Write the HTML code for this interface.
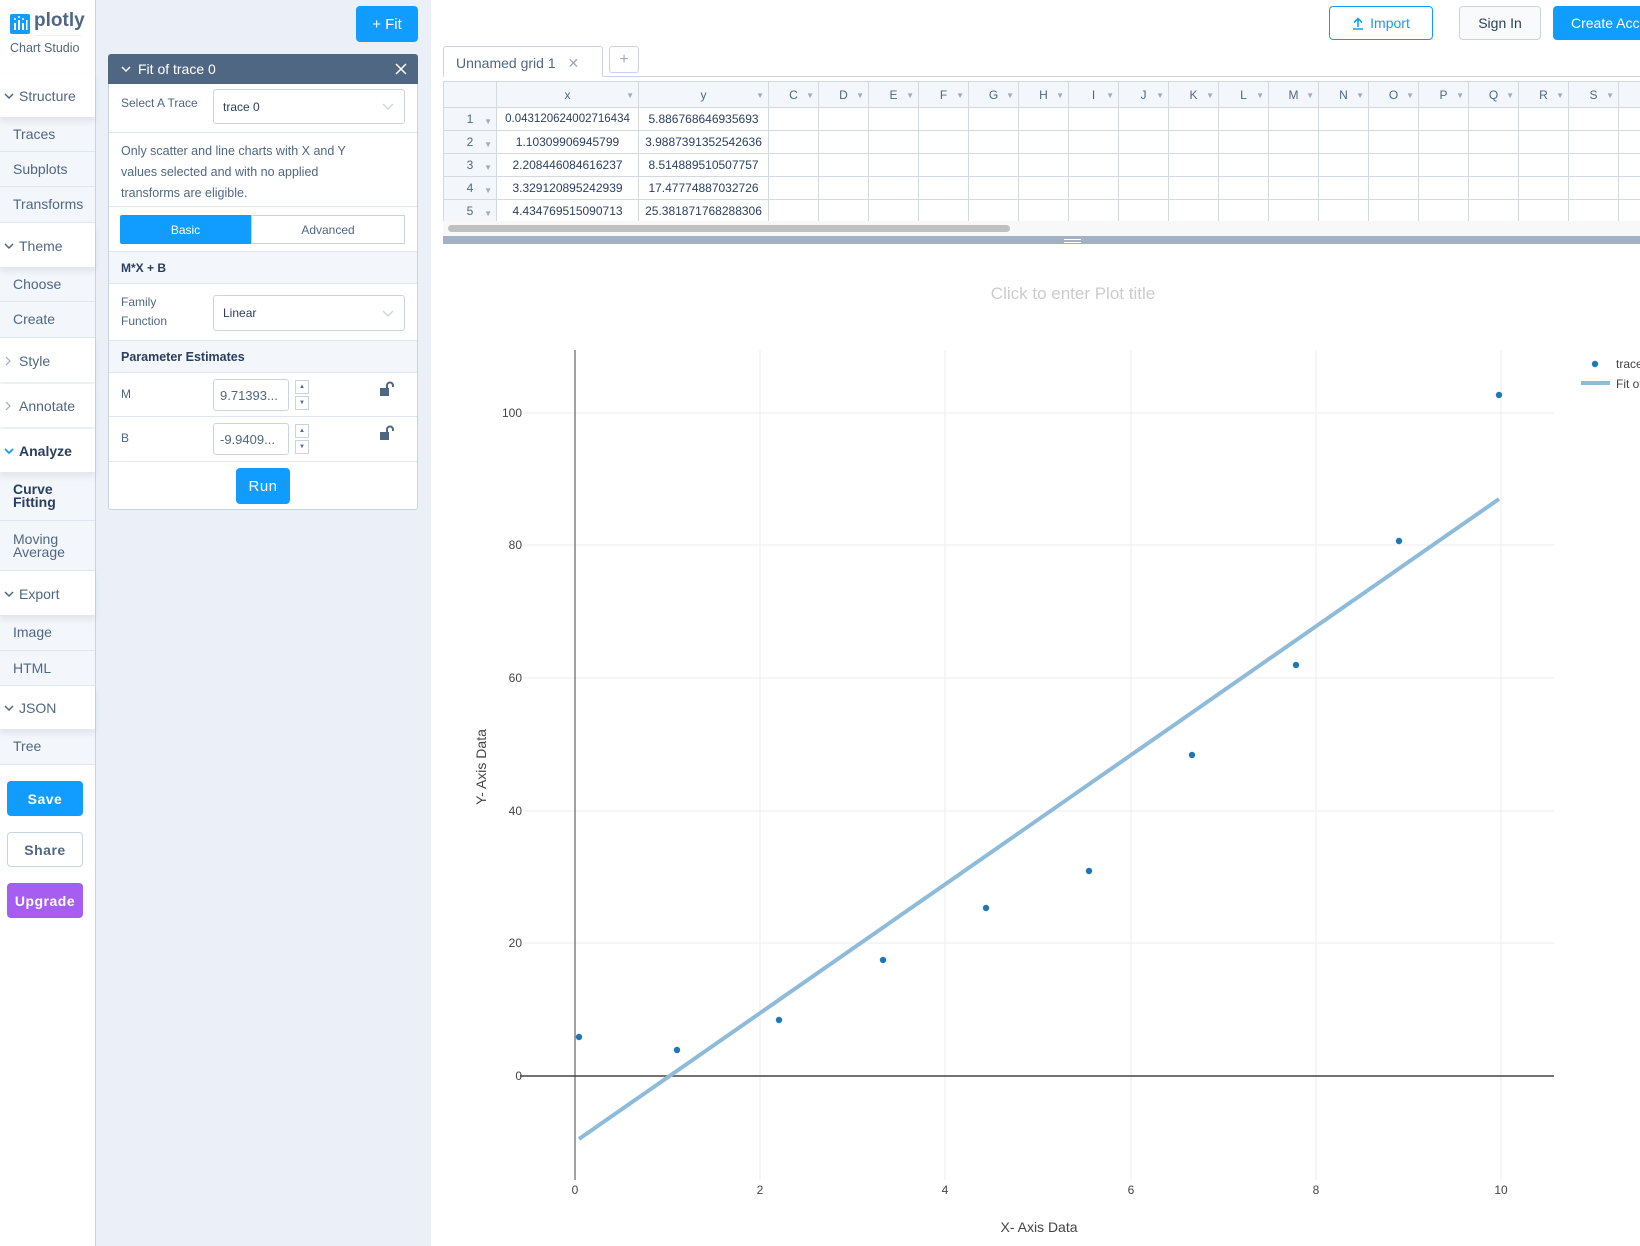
<!DOCTYPE html>
<html><head><meta charset="utf-8"><style>
*{box-sizing:border-box;margin:0;padding:0}
body{width:1640px;height:1246px;position:relative;overflow:hidden;font-family:"Liberation Sans",sans-serif;background:#fff;color:#506784}
.a{position:absolute}
#side{left:0;top:0;width:96px;height:1246px;background:#fff;border-right:1px solid #c8d4e3}
.hd{position:absolute;left:0;width:95px;background:#fff;font-size:14px;color:#506784;padding-left:19px;display:flex;align-items:center;box-shadow:0 4px 6px rgba(80,103,132,.12);z-index:2}
.hd svg{position:absolute;left:4px}
.it{position:absolute;left:0;width:95px;background:#f3f6fa;border-bottom:1px solid #dfe6ef;font-size:14px;color:#506784;padding-left:13px;display:flex;align-items:center;line-height:13px}
.btn{position:absolute;left:7px;width:76px;height:35px;border-radius:4px;font-size:14px;font-weight:bold;display:flex;align-items:center;justify-content:center;letter-spacing:.5px}
#pcol{left:96px;top:0;width:335px;height:1246px;background:#ebf0f8}
#panel{left:108px;top:54px;width:310px;height:456px;background:#fff;border:1px solid #c8d4e3;border-radius:3px}
.row{position:absolute;left:0;width:308px;border-bottom:1px solid #dfe6ef}
.lbl{position:absolute;left:12px;font-size:12px;color:#506784}
.sel{position:absolute;left:104px;width:192px;border:1px solid #c8d4e3;border-radius:3px;font-size:12px;color:#2a3f5f;padding-left:9px;display:flex;align-items:center}
.sel svg{position:absolute;right:10px}
table{border-collapse:collapse;font-family:"Liberation Sans",sans-serif;font-size:12px;color:#2a3f5f}
td{border:1px solid #d4d9e0;height:23px;text-align:center;white-space:nowrap;overflow:hidden}
th{border:1px solid #d4d9e0;height:26px;background:#f3f6fa;font-weight:normal;color:#506784;font-size:12px;position:relative}
th span.d,td span.d{font-size:8px;color:#a0aabb;position:absolute;right:4px;top:9px}
td.rn{background:#f3f6fa;color:#506784;position:relative}
</style></head><body>
<div id="side" class="a">
 <svg class="a" style="left:10px;top:14px" width="20" height="20"><rect width="20" height="20" rx="2" fill="#119dff"/><g fill="#fff"><rect x="4" y="9" width="2" height="7"/><rect x="8" y="6" width="2" height="10"/><rect x="12" y="9" width="2" height="7"/><rect x="16" y="6" width="1.5" height="10"/><circle cx="5" cy="5" r="1"/><circle cx="9" cy="3" r="1"/><circle cx="13" cy="5" r="1"/></g></svg>
 <div class="a" style="left:34px;top:10px;font-size:19px;font-weight:bold;color:#506784">plotly</div>
 <div class="a" style="left:35px;top:35px;width:46px;height:1px;background:#eef1f6"></div>
 <div class="a" style="left:10px;top:41px;font-size:12.5px;color:#506784">Chart Studio</div>
 <div class="hd" style="top:74px;height:43px"><svg width="10" height="8"><path d="M1 2l4 4 4-4" stroke="#506784" stroke-width="1.5" fill="none"/></svg>Structure</div>
 <div class="it" style="top:117px;height:35px">Traces</div>
 <div class="it" style="top:152px;height:35px">Subplots</div>
 <div class="it" style="top:187px;height:36px">Transforms</div>
 <div class="hd" style="top:224px;height:43px"><svg width="10" height="8"><path d="M1 2l4 4 4-4" stroke="#506784" stroke-width="1.5" fill="none"/></svg>Theme</div>
 <div class="it" style="top:267px;height:35px">Choose</div>
 <div class="it" style="top:302px;height:36px">Create</div>
 <div class="hd" style="top:339px;height:43px"><svg width="8" height="10"><path d="M2 1l4 4-4 4" stroke="#a0aabb" stroke-width="1.2" fill="none"/></svg>Style</div>
 <div class="hd" style="top:384px;height:43px"><svg width="8" height="10"><path d="M2 1l4 4-4 4" stroke="#a0aabb" stroke-width="1.2" fill="none"/></svg>Annotate</div>
 <div class="hd" style="top:429px;height:43px;font-weight:bold;color:#2a3f5f"><svg width="10" height="8"><path d="M1 2l4 4 4-4" stroke="#119dff" stroke-width="1.8" fill="none"/></svg>Analyze</div>
 <div class="it" style="top:472px;height:49px;font-weight:bold;color:#2a3f5f">Curve<br>Fitting</div>
 <div class="it" style="top:521px;height:50px">Moving<br>Average</div>
 <div class="hd" style="top:572px;height:43px"><svg width="10" height="8"><path d="M1 2l4 4 4-4" stroke="#506784" stroke-width="1.5" fill="none"/></svg>Export</div>
 <div class="it" style="top:615px;height:36px">Image</div>
 <div class="it" style="top:651px;height:35px">HTML</div>
 <div class="hd" style="top:687px;height:42px"><svg width="10" height="8"><path d="M1 2l4 4 4-4" stroke="#506784" stroke-width="1.5" fill="none"/></svg>JSON</div>
 <div class="it" style="top:729px;height:36px">Tree</div>
 <div class="btn" style="top:781px;background:#119dff;color:#fff">Save</div>
 <div class="btn" style="top:832px;background:#fff;color:#506784;border:1px solid #c8d4e3">Share</div>
 <div class="btn" style="top:883px;background:#a55df2;color:#fff">Upgrade</div>
</div>
<div id="pcol" class="a"></div>
<div class="a" style="left:356px;top:6px;width:62px;height:36px;background:#119dff;border-radius:4px;color:#fff;font-size:15px;display:flex;align-items:center;justify-content:center">+ Fit</div>
<div id="panel" class="a">
 <div class="a" style="left:-1px;top:-1px;width:310px;height:30px;background:#506784;border-radius:3px 3px 0 0;color:#fff;font-size:14px;padding-left:30px;line-height:30px">Fit of trace 0
  <svg class="a" style="left:13px;top:12px" width="10" height="8"><path d="M1 1l4 4 4-4" stroke="#fff" stroke-width="1.5" fill="none"/></svg>
  <svg class="a" style="left:287px;top:9px" width="12" height="12"><path d="M1 1l10 10M11 1L1 11" stroke="#fff" stroke-width="1.5"/></svg></div>
 <div class="row" style="top:29px;height:49px"><div class="lbl" style="top:12px">Select A Trace</div><div class="sel" style="top:5px;height:35px">trace 0<svg width="12" height="7"><path d="M1 1l5 5 5-5" stroke="#c8d4e3" stroke-width="1.3" fill="none"/></svg></div></div>
 <div class="row" style="top:78px;height:74px"><div class="lbl" style="top:8px;line-height:21px;font-size:12.5px;width:250px">Only scatter and line charts with X and Y values selected and with no applied transforms are eligible.</div></div>
 <div class="row" style="top:152px;height:45px">
  <div class="a" style="left:11px;top:8px;width:131px;height:29px;background:#119dff;color:#fff;font-size:12px;display:flex;align-items:center;justify-content:center;border-radius:2px 0 0 2px">Basic</div>
  <div class="a" style="left:142px;top:8px;width:154px;height:29px;border:1px solid #c8d4e3;color:#506784;font-size:12px;display:flex;align-items:center;justify-content:center">Advanced</div></div>
 <div class="row" style="top:197px;height:32px;background:#f3f6fa"><div class="lbl" style="top:9px;font-weight:bold;color:#2a3f5f">M*X + B</div></div>
 <div class="row" style="top:229px;height:57px"><div class="lbl" style="top:9px;line-height:19px">Family<br>Function</div><div class="sel" style="top:11px;height:36px">Linear<svg width="12" height="7"><path d="M1 1l5 5 5-5" stroke="#c8d4e3" stroke-width="1.3" fill="none"/></svg></div></div>
 <div class="row" style="top:286px;height:32px;background:#f3f6fa"><div class="lbl" style="top:9px;font-weight:bold;color:#2a3f5f;font-size:12.5px">Parameter Estimates</div></div>
 <div class="row" style="top:318px;height:44px"><div class="lbl" style="top:14px">M</div>
  <div class="a" style="left:104px;top:6px;width:76px;height:32px;border:1px solid #c8d4e3;border-radius:3px;font-size:13px;color:#506784;padding:8px 6px">9.71393...</div>
  <div class="a" style="left:186px;top:7px;width:14px;height:14px;border:1px solid #c8d4e3;font-size:6px;text-align:center;line-height:12px">▲</div>
  <div class="a" style="left:186px;top:23px;width:14px;height:14px;border:1px solid #c8d4e3;font-size:6px;text-align:center;line-height:12px">▼</div>
  <svg class="a" style="left:270px;top:8px" width="16" height="16"><path d="M8 7V4.5a3 3 0 0 1 6 0V6" stroke="#506784" stroke-width="2" fill="none"/><rect x="1" y="7" width="9" height="8" fill="#506784"/></svg></div>
 <div class="row" style="top:362px;height:45px"><div class="lbl" style="top:14px">B</div>
  <div class="a" style="left:104px;top:6px;width:76px;height:32px;border:1px solid #c8d4e3;border-radius:3px;font-size:13px;color:#506784;padding:8px 6px">-9.9409...</div>
  <div class="a" style="left:186px;top:7px;width:14px;height:14px;border:1px solid #c8d4e3;font-size:6px;text-align:center;line-height:12px">▲</div>
  <div class="a" style="left:186px;top:23px;width:14px;height:14px;border:1px solid #c8d4e3;font-size:6px;text-align:center;line-height:12px">▼</div>
  <svg class="a" style="left:270px;top:8px" width="16" height="16"><path d="M8 7V4.5a3 3 0 0 1 6 0V6" stroke="#506784" stroke-width="2" fill="none"/><rect x="1" y="7" width="9" height="8" fill="#506784"/></svg></div>
 <div class="a" style="left:127px;top:413px;width:54px;height:36px;background:#119dff;border-radius:4px;color:#fff;font-size:15px;display:flex;align-items:center;justify-content:center;letter-spacing:.5px">Run</div>
</div>
<!-- top bar -->
<div class="a" style="left:1329px;top:6px;width:104px;height:34px;border:1px solid #119dff;border-radius:4px;color:#119dff;font-size:14px;display:flex;align-items:center;justify-content:center"><svg width="12" height="13" style="margin-right:6px"><path d="M6 10V2M2 5.5L6 1.5 10 5.5M1 12h10" stroke="#119dff" stroke-width="1.6" fill="none"/></svg>Import</div>
<div class="a" style="left:1459px;top:6px;width:82px;height:34px;border:1px solid #c8d4e3;border-radius:4px;background:#f8fafc;color:#2a3f5f;font-size:14px;display:flex;align-items:center;justify-content:center">Sign In</div>
<div class="a" style="left:1553px;top:6px;width:100px;height:34px;background:#119dff;border-radius:4px;color:#fff;font-size:14px;padding:9px 18px;white-space:nowrap;overflow:hidden">Create Account</div>
<div class="a" style="left:443px;top:76px;width:1197px;height:1px;background:#c8d4e3"></div>
<div class="a" style="left:443px;top:46px;width:160px;height:31px;border:1px solid #c8d4e3;border-bottom:1px solid #fff;background:#fff;font-size:14px;color:#506784;padding:8px 12px;border-radius:3px 3px 0 0">Unnamed grid 1 <span style="color:#a0aabb;margin-left:8px">✕</span></div>
<div class="a" style="left:609px;top:46px;width:30px;height:27px;border:1px solid #c8d4e3;border-radius:3px;color:#a0aabb;font-size:16px;text-align:center;line-height:25px">+</div>
<div class="a" style="left:443px;top:81px;width:1197px;height:140px;overflow:hidden">
<table style="table-layout:fixed;width:1300px">
<colgroup><col style="width:53px"><col style="width:142px"><col style="width:130px"><col span="19" style="width:50px"></colgroup>
<tr><th></th><th>x<span class="d">▼</span></th><th>y<span class="d">▼</span></th><th>C<span class="d">▼</span></th><th>D<span class="d">▼</span></th><th>E<span class="d">▼</span></th><th>F<span class="d">▼</span></th><th>G<span class="d">▼</span></th><th>H<span class="d">▼</span></th><th>I<span class="d">▼</span></th><th>J<span class="d">▼</span></th><th>K<span class="d">▼</span></th><th>L<span class="d">▼</span></th><th>M<span class="d">▼</span></th><th>N<span class="d">▼</span></th><th>O<span class="d">▼</span></th><th>P<span class="d">▼</span></th><th>Q<span class="d">▼</span></th><th>R<span class="d">▼</span></th><th>S<span class="d">▼</span></th><th></th><th></th><th></th></tr>
<tr><td class="rn">1<span class="d">▼</span></td><td style="font-size:11.5px">0.043120624002716434</td><td>5.886768646935693</td><td></td><td></td><td></td><td></td><td></td><td></td><td></td><td></td><td></td><td></td><td></td><td></td><td></td><td></td><td></td><td></td><td></td><td></td><td></td><td></td></tr>
<tr><td class="rn">2<span class="d">▼</span></td><td>1.10309906945799</td><td>3.9887391352542636</td><td></td><td></td><td></td><td></td><td></td><td></td><td></td><td></td><td></td><td></td><td></td><td></td><td></td><td></td><td></td><td></td><td></td><td></td><td></td><td></td></tr>
<tr><td class="rn">3<span class="d">▼</span></td><td>2.208446084616237</td><td>8.514889510507757</td><td></td><td></td><td></td><td></td><td></td><td></td><td></td><td></td><td></td><td></td><td></td><td></td><td></td><td></td><td></td><td></td><td></td><td></td><td></td><td></td></tr>
<tr><td class="rn">4<span class="d">▼</span></td><td>3.329120895242939</td><td>17.47774887032726</td><td></td><td></td><td></td><td></td><td></td><td></td><td></td><td></td><td></td><td></td><td></td><td></td><td></td><td></td><td></td><td></td><td></td><td></td><td></td><td></td></tr>
<tr><td class="rn">5<span class="d">▼</span></td><td>4.434769515090713</td><td>25.381871768288306</td><td></td><td></td><td></td><td></td><td></td><td></td><td></td><td></td><td></td><td></td><td></td><td></td><td></td><td></td><td></td><td></td><td></td><td></td><td></td><td></td></tr>
</table></div>
<div class="a" style="left:443px;top:221px;width:1197px;height:15px;background:#f8f8f8"></div>
<div class="a" style="left:448px;top:225px;width:562px;height:7px;background:#c0c0c0;border-radius:4px"></div>
<div class="a" style="left:443px;top:236px;width:1197px;height:8px;background:#a3b1c6"></div>
<div class="a" style="left:1064px;top:239px;width:17px;height:1px;background:#fff"></div>
<div class="a" style="left:1064px;top:242px;width:17px;height:1px;background:#fff"></div>
<svg class="a" style="left:0;top:0" width="1640" height="1246" font-family="Liberation Sans, sans-serif">
<g stroke="#eeeeee" stroke-width="1">
<line x1="760" y1="350" x2="760" y2="1180"/><line x1="945" y1="350" x2="945" y2="1180"/><line x1="1131" y1="350" x2="1131" y2="1180"/><line x1="1316" y1="350" x2="1316" y2="1180"/><line x1="1501" y1="350" x2="1501" y2="1180"/>
<line x1="524" y1="943" x2="1554" y2="943"/><line x1="524" y1="811" x2="1554" y2="811"/><line x1="524" y1="678" x2="1554" y2="678"/><line x1="524" y1="545" x2="1554" y2="545"/><line x1="524" y1="413" x2="1554" y2="413"/>
</g>
<line x1="575" y1="350" x2="575" y2="1180" stroke="#444" stroke-width="1"/>
<line x1="520" y1="1076" x2="1554" y2="1076" stroke="#444" stroke-width="1.5"/>
<line x1="579" y1="1139" x2="1499" y2="499" stroke="#8fbbdb" stroke-width="4"/>
<g fill="#1f77b4">
<circle cx="579" cy="1037" r="3.2"/><circle cx="677" cy="1050" r="3.2"/><circle cx="779" cy="1020" r="3.2"/><circle cx="883" cy="960" r="3.2"/><circle cx="986" cy="908" r="3.2"/><circle cx="1089" cy="871" r="3.2"/><circle cx="1192" cy="755" r="3.2"/><circle cx="1296" cy="665" r="3.2"/><circle cx="1399" cy="541" r="3.2"/><circle cx="1499" cy="395" r="3.2"/>
<circle cx="1595" cy="364" r="3.2"/></g>
<line x1="1581" y1="383" x2="1610" y2="383" stroke="#8fbbdb" stroke-width="4"/>
<g font-size="12" fill="#444">
<text x="1616" y="368">trace 0</text><text x="1616" y="388">Fit of trace 0</text>
<g text-anchor="end"><text x="522" y="1080">0</text><text x="522" y="947">20</text><text x="522" y="815">40</text><text x="522" y="682">60</text><text x="522" y="549">80</text><text x="522" y="417">100</text></g>
<g text-anchor="middle"><text x="575" y="1194">0</text><text x="760" y="1194">2</text><text x="945" y="1194">4</text><text x="1131" y="1194">6</text><text x="1316" y="1194">8</text><text x="1501" y="1194">10</text></g>
</g>
<text x="1039" y="1232" font-size="14" fill="#444" text-anchor="middle">X- Axis Data</text>
<text transform="translate(486,767) rotate(-90)" font-size="14" fill="#444" text-anchor="middle">Y- Axis Data</text>
<text x="1073" y="299" font-size="17" fill="#ccc" text-anchor="middle">Click to enter Plot title</text>
</svg>
</body></html>
